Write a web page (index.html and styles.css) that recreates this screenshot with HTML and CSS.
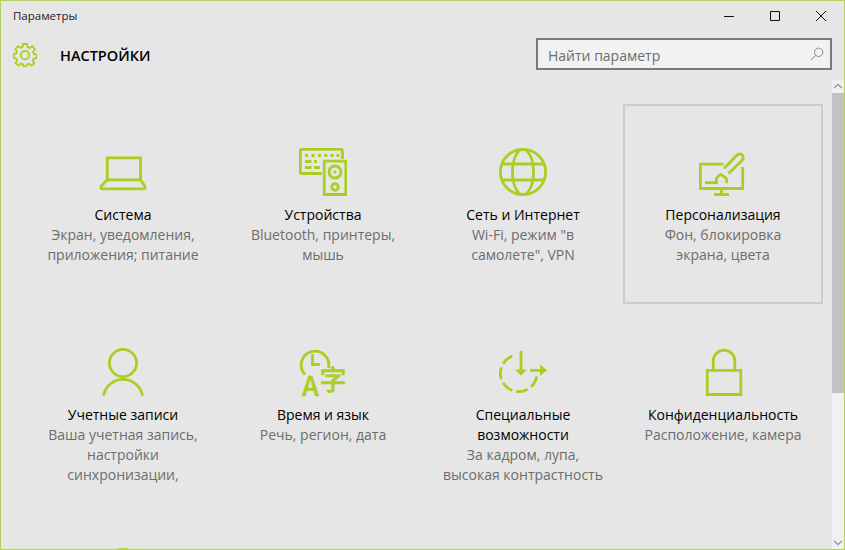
FILE: index.html

```html
<!DOCTYPE html>
<html lang="ru">
<head>
    <meta charset="UTF-8">
    <meta name="viewport" content="width=device-width, initial-scale=1.0">
    <title>Параметры</title>
    <link rel="stylesheet" href="styles.css">
</head>
<body>
    <div class="window">
        <div class="titlebar">
            <span class="title">Параметры</span>
            <div class="controls">
                <svg class="control" viewBox="0 0 12 12"><path d="M1 6.500H11"/></svg>
                <svg class="control" viewBox="0 0 12 12"><path d="M1.500 1.500H10.500V10.500H1.500Z"/></svg>
                <svg class="control" viewBox="0 0 12 12"><path d="M1 1L11 11M11 1L1 11"/></svg>
            </div>
        </div>

        <header class="header">
            <svg class="gear" viewBox="0 0 24 24">
                <path d="M9.900 1H14.100L14.800 4.100 16.600 4.900 19.400 3.200 22 6.300 20 8.800 20.700 10.700 23.500 11.500V15L20.600 15.800 19.800 17.600 21.300 20.400 18.200 22.600 15.900 20.800 14 21.400 13.300 23.200H10.500L9.900 21.300 8 20.600 5.500 22.400 2.400 20.200 4 17.600 3.200 15.700 .7 14.900V10.900L3.300 10.400 4 8.500 2.300 6 5.100 3.100 7.700 4.800 9.400 4.100Z"/>
                <circle cx="12" cy="12.200" r="4.200"/>
            </svg>
            <h1>НАСТРОЙКИ</h1>
            <div class="search">
                <span class="search-text">Найти параметр</span>
                <svg class="search-icon" viewBox="0 0 14 14"><circle cx="8.700" cy="5.300" r="4.200"/><path d="M5.800 8.400L1 13"/></svg>
            </div>
        </header>

        <div class="main">
            <div class="grid">
                <div class="tile">
                    <svg class="icon" viewBox="0 0 48 48">
                        <path d="M8.300 31.800V9.900H41.500V31.800Z"/>
                        <path d="M8.300 31.800L2.300 38Q.9 40.800 3.500 40.800H44.500Q47.100 40.800 45.700 38L41.500 31.800"/>
                    </svg>
                    <h2>Система</h2>
                    <p>Экран, уведомления, приложения; питание</p>
                </div>
                <div class="tile">
                    <svg class="icon" viewBox="0 0 48 48">
                        <path d="M43.500 11V3Q43.500 1.300 41.800 1.300H3Q1.300 1.300 1.300 3V24Q1.300 25.500 3 25.500H23"/>
                        <path class="fill" d="M6 6h3v3H6zM12.500 6h3v3h-3zM19 6h3v3h-3zM25.300 6h3v3h-3zM31.500 6h3v3h-3zM37.500 6h3v3h-3zM6 12h6.500v3H6zM15 12h3v3h-3zM6 18h6.500v3H6zM15 18h6v3h-6z"/>
                        <path d="M25.200 13.200H46.800V46.500H25.200Z"/>
                        <circle cx="36" cy="24" r="6"/>
                        <circle class="fill" cx="36" cy="24" r="1.600"/>
                        <circle cx="36" cy="39" r="3.300"/>
                    </svg>
                    <h2>Устройства</h2>
                    <p>Bluetooth, принтеры, мышь</p>
                </div>
                <div class="tile">
                    <svg class="icon" viewBox="0 0 48 48">
                        <circle cx="24" cy="24" r="22.600"/>
                        <ellipse cx="24" cy="24" rx="10.500" ry="22.600"/>
                        <path d="M3.500 16H44.500M3.500 32H44.500"/>
                    </svg>
                    <h2>Сеть и Интернет</h2>
                    <p>Wi-Fi, режим "в самолете", VPN</p>
                </div>
                <div class="tile tile-active">
                    <svg class="icon" viewBox="0 0 48 48">
                        <path d="M24.500 16.200H1.300V40.500H43.700V19"/>
                        <path d="M22.500 41V45M15 46.500H30"/>
                        <path d="M6 34.700H19"/>
                        <path d="M25 20.500L38 7A3.600 3.600 0 0 1 43.200 12.200L29.500 25.500"/>
                        <path d="M17 35Q16.500 28.500 22 26.500L26.500 29.500Q29 32 27 35"/>
                    </svg>
                    <h2>Персонализация</h2>
                    <p>Фон, блокировка экрана, цвета</p>
                </div>
                <div class="tile">
                    <svg class="icon" viewBox="0 0 48 48">
                        <circle cx="24" cy="15" r="13.600"/>
                        <path d="M4.500 47.700A19.800 19.800 0 0 1 43.500 47.700"/>
                    </svg>
                    <h2>Учетные записи</h2>
                    <p>Ваша учетная запись, настройки синхронизации,</p>
                </div>
                <div class="tile">
                    <svg class="icon icon-open" viewBox="0 0 48 48">
                        <path d="M6 26.500A13.800 13.800 0 1 1 29.500 20"/>
                        <path d="M13.500 6V16.500H21"/>
                        <text class="glyph" x="3" y="47.700" font-size="27">A</text>
                        <text class="glyph" x="20.500" y="42" font-size="27">字</text>
                    </svg>
                    <h2>Время и язык</h2>
                    <p>Речь, регион, дата</p>
                </div>
                <div class="tile">
                    <svg class="icon" viewBox="0 0 48 48">
                        <circle class="dashed" cx="19.700" cy="25.300" r="18.300" transform="rotate(10 19.700 25.300)"/>
                        <path d="M22 3V23M31 22.300H43"/>
                        <path class="fill" d="M16 21.500H28L22 27.500ZM41 16.500L48 22.300 41 28Z"/>
                    </svg>
                    <h2>Специальные возможности</h2>
                    <p>За кадром, лупа, высокая контрастность</p>
                </div>
                <div class="tile">
                    <svg class="icon" viewBox="0 0 48 48">
                        <path d="M8.300 22.300H41.800V46.500H8.300Z"/>
                        <path d="M14.300 22V12A10.800 10.800 0 0 1 35.800 12V22"/>
                    </svg>
                    <h2>Конфиденциальность</h2>
                    <p>Расположение, камера</p>
                </div>
                <div class="tile">
                    <svg class="icon" viewBox="0 0 48 48">
                        <circle cx="24" cy="24" r="22.600"/>
                    </svg>
                </div>
            </div>

            <div class="scrollbar">
                <svg class="arrow" viewBox="0 0 12 13"><path d="M2 8L6 4.500 10 8"/></svg>
                <div class="thumb"></div>
                <div class="track"></div>
                <svg class="arrow" viewBox="0 0 12 13"><path d="M2 5L6 8.500 10 5"/></svg>
            </div>
        </div>
    </div>
</body>
</html>
```

FILE: styles.css

```css
* {
    box-sizing: border-box;
}
body {
    margin: 0;
    font-family: "Open Sans", "Noto Sans", sans-serif;
    background-color: #e6e6e6;
}
.window {
    display: flex;
    flex-direction: column;
    width: 845px;
    height: 550px;
    border: 1px solid #b7cf5c;
    overflow: hidden;
}

/* title bar */
.titlebar {
    display: flex;
    justify-content: space-between;
    align-items: center;
    height: 30px;
    padding-left: 12px;
}
.title {
    margin-top: -1px;
    font-size: 11.500px;
    color: #222;
}
.controls {
    display: flex;
    gap: 34px;
    padding-right: 17px;
}
.control {
    width: 12px;
    height: 12px;
    fill: none;
    stroke: #111;
    stroke-width: 1;
}

/* header with search */
.header {
    display: flex;
    align-items: center;
    height: 49px;
    padding-left: 12px;
}
.gear {
    width: 24px;
    height: 24px;
    margin-top: -2px;
    fill: none;
    stroke: #a9cf23;
    stroke-width: 1.800;
}
.header h1 {
    margin: 0 0 0 23px;
    font-size: 14.500px;
    font-weight: 600;
    color: #000;
}
.search {
    display: flex;
    justify-content: space-between;
    align-items: center;
    width: 296px;
    height: 32px;
    margin-left: auto;
    margin-right: 12px;
    margin-top: -3px;
    padding: 0 6px 0 10px;
    border: 2px solid #7a7a7a;
    background-color: #f2f2f2;
    font-size: 14px;
    color: #6d6d6d;
}
.search-text {
    padding-top: 2px;
}
.search-icon {
    width: 14px;
    height: 14px;
    fill: none;
    stroke: #8a8a8a;
    stroke-width: 1;
}

/* tiles */
.main {
    display: flex;
    flex: 1;
    min-height: 0;
}
.grid {
    display: grid;
    grid-template-columns: repeat(4, 200px);
    grid-auto-rows: 200px;
    flex: 1;
    min-width: 0;
    padding: 24px 0 0 22px;
    overflow: hidden;
}
.tile {
    padding: 42px 16px 0;
    border: 2px solid transparent;
    text-align: center;
}
.tile-active {
    border-color: #cdcdcd;
}
.icon {
    display: block;
    width: 48px;
    height: 48px;
    margin: 0 auto 9px;
    fill: none;
    stroke: #a9cf23;
    stroke-width: 2.800;
}
.icon-open {
    overflow: visible;
}
.icon .fill {
    fill: #a9cf23;
    stroke: none;
}
.icon .dashed {
    stroke-dasharray: 12 4 12 4 12 4 12 4 12 39;
}
.icon .glyph {
    fill: #a9cf23;
    stroke: #a9cf23;
    stroke-width: .5;
    font-family: "Noto Sans CJK SC", "Liberation Sans", sans-serif;
    font-weight: 500;
}
.tile h2 {
    margin: 0;
    font-size: 14px;
    font-weight: 400;
    line-height: 20px;
    color: #000;
}
.tile p {
    margin: 0;
    font-size: 14px;
    line-height: 20px;
    color: #6d6d6d;
}

/* scrollbar */
.scrollbar {
    display: flex;
    flex-direction: column;
    width: 12px;
    background-color: #f1f1f1;
}
.arrow {
    width: 12px;
    height: 13px;
    fill: none;
    stroke: #9a9a9a;
    stroke-width: 1.500;
}
.thumb {
    height: 300px;
    background-color: #c2c2c2;
}
.track {
    flex: 1;
}
```
